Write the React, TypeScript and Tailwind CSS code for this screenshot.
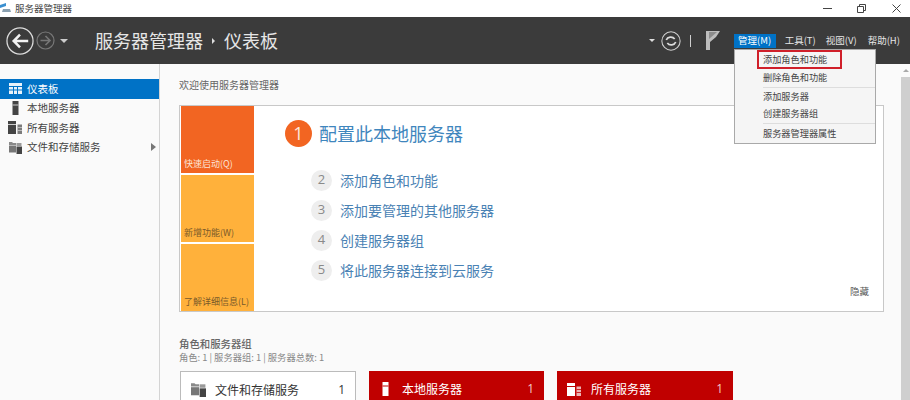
import type { ReactNode } from 'react';

const FONT = "font-['Noto_Sans_CJK_SC','Liberation_Sans',sans-serif]";

function DashIcon({ color }: { color: string }) {
  return (
    <svg width="13" height="11" viewBox="0 0 13 11" className="shrink-0">
      <rect width="13" height="11" fill={color} />
      <path d="M0 3.5h13M0 7h13M4.5 3v8M8.5 3v8" stroke="#0072c6" strokeWidth="1" fill="none" />
    </svg>
  );
}

function TowerIcon({ color, slot }: { color: string; slot: string }) {
  return (
    <svg width="7" height="14" viewBox="0 0 7 14" className="shrink-0">
      <rect x="0.5" width="6" height="14" fill={color} />
      <path d="M0.5 4h6" stroke={slot} strokeWidth="1" />
    </svg>
  );
}

function AllServersIcon({ color, slot }: { color: string; slot: string }) {
  return (
    <svg width="14" height="13" viewBox="0 0 14 13" className="shrink-0">
      <rect width="8" height="13" fill={color} />
      <path d="M0 3.5h8" stroke={slot} strokeWidth="1" />
      <rect x="9.5" y="3.5" width="4.5" height="9.5" fill={color} opacity="0.7" />
      <path d="M9.5 6.5h4.5M9.5 9.5h4.5" stroke={slot} strokeWidth="0.8" />
    </svg>
  );
}

function FilesIcon({ size = 13 }: { size?: number }) {
  return (
    <svg width={size} height={size} viewBox="0 0 13 13" className="shrink-0">
      <path d="M0 1h3l1 1h3v2H0z" fill="#8a8a8a" />
      <rect y="4.5" width="7" height="7" fill="#777" />
      <rect x="7.5" y="2" width="5" height="3" fill="#9a9a9a" />
      <rect x="7.5" y="5.5" width="5.5" height="7.5" fill="#444" />
    </svg>
  );
}

function SideRow({ icon, label, active, arrow }: { icon: ReactNode; label: string; active?: boolean; arrow?: boolean }) {
  return (
    <div className={`flex h-[19.5px] items-center text-[10.5px] ${active ? 'bg-[#0072c6] text-white' : 'text-[#444]'}`}>
      <span className="flex w-[27px] shrink-0 justify-center pl-[3px]">{icon}</span>
      <span className="flex-1">{label}</span>
      {arrow && <span className="mr-[3px] h-0 w-0 border-y-[4px] border-l-[5px] border-y-transparent border-l-[#777]" />}
    </div>
  );
}

function Tile({ label, bg, text, first }: { label: string; bg: string; text: string; first?: boolean }) {
  return (
    <div className={`ml-px flex h-[67px] items-end px-[3px] pb-[2px] text-[9px] leading-[14px] ${bg} ${text} ${first ? '' : 'mt-[2px]'}`}>
      {label}
    </div>
  );
}

function Step({ n, label }: { n: number; label: string }) {
  return (
    <div className="flex h-[30px] items-center">
      <span className="flex h-[21px] w-[21px] items-center justify-center rounded-full bg-[#eeeeee] font-['Open_Sans',sans-serif] text-[13px] text-[#8a8a8a]">
        {n}
      </span>
      <span className="ml-[8px] text-[14px] text-[#4a82b4]">{label}</span>
    </div>
  );
}

function GroupCard({ icon, label, red, width, iconWidth }: { icon: ReactNode; label: string; red?: boolean; width: string; iconWidth: string }) {
  return (
    <div className={`flex h-[38px] items-center pb-[2px] ${width} ${red ? 'bg-[#c00000] text-white' : 'border-x border-t border-[#bbb] bg-white text-[#333]'}`}>
      <span className={`flex shrink-0 justify-center ${iconWidth}`}>{icon}</span>
      <span className="flex-1 text-[12px]">{label}</span>
      <span className={`mr-[10px] font-['Open_Sans',sans-serif] text-[12px] ${red ? 'text-[#f3c9c9]' : ''}`}>1</span>
    </div>
  );
}

export default function App() {
  return (
    <div className={`relative flex h-[400px] w-[910px] flex-col overflow-hidden bg-white ${FONT}`}>
      {/* title bar */}
      <div className="flex h-[17px] shrink-0 items-center bg-white">
        <svg width="11" height="11" viewBox="0 0 11 11" className="shrink-0">
          <path d="M0 2 6 0v3L0 5z" fill="#3a8fd0" />
          <path d="M3 6h7l1 3H2z" fill="#8aa0b0" />
        </svg>
        <span className="ml-[4px] text-[9.5px] text-[#444]">服务器管理器</span>
        <div className="ml-auto flex items-center">
          <span className="h-px w-[9px] bg-[#444]" />
          <svg width="9" height="9" viewBox="0 0 9 9" className="ml-[25px]">
            <path d="M0.5 2.5h6v6h-6zM2.5 2.5v-2h6v6h-2" fill="none" stroke="#444" />
          </svg>
          <svg width="9" height="9" viewBox="0 0 9 9" className="ml-[26px] mr-[9px]">
            <path d="M0.5 0.5l8 8M8.5 0.5l-8 8" stroke="#444" fill="none" />
          </svg>
        </div>
      </div>

      {/* header */}
      <div className="flex h-[47px] shrink-0 items-center bg-[#3b3b3b] text-white">
        <svg width="28" height="28" viewBox="0 0 29 29" className="ml-[6px] shrink-0">
          <circle cx="14.5" cy="14.5" r="13.5" fill="none" stroke="#dcdcdc" strokeWidth="1.3" />
          <path d="M23 14.5H8M14.5 8 8 14.5l6.5 6.5" fill="none" stroke="#f2f2f2" strokeWidth="2.6" />
        </svg>
        <svg width="19" height="19" viewBox="0 0 19 19" className="ml-[2px] shrink-0">
          <circle cx="9.5" cy="9.5" r="8.5" fill="none" stroke="#777" strokeWidth="1.2" />
          <path d="M4.5 9.5h9M9.5 5l4.5 4.5L9.5 14" fill="none" stroke="#777" strokeWidth="1.6" />
        </svg>
        <span className="ml-[5px] h-0 w-0 border-x-[4px] border-t-[4px] border-x-transparent border-t-[#ccc]" />
        <span className="ml-[27px] text-[18px] text-[#e6e6e6]">服务器管理器</span>
        <span className="ml-[9px] h-0 w-0 border-y-[3px] border-l-[3px] border-y-transparent border-l-[#ddd]" />
        <span className="ml-[9px] text-[18px] text-[#e6e6e6]">仪表板</span>

        <div className="ml-auto flex h-full items-center">
          <span className="h-0 w-0 border-x-[3px] border-t-[3px] border-x-transparent border-t-[#ddd]" />
          <svg width="20" height="20" viewBox="0 0 19 19" className="ml-[6px]">
            <circle cx="9.5" cy="9.5" r="8.7" fill="none" stroke="#cfcfcf" strokeWidth="1" />
            <path d="M5 8.5a4.5 4 0 0 1 8-1M14 10.5a4.5 4 0 0 1-8 1" fill="none" stroke="#dcdcdc" strokeWidth="1.6" />
          </svg>
          <span className="ml-[9px] h-[12px] w-px bg-[#cfcfcf]" />
          <svg width="14" height="19" viewBox="0 0 14 19" className="ml-[15px]">
            <path d="M0 0h14l-4 6-6 5v8H0z" fill="#bdbdbd" />
            <path d="M3 1h8L3 8z" fill="#8c8c8c" />
          </svg>
          <div className="ml-[14px] flex h-[14px] w-[42px] items-center justify-center bg-[#0072c6] text-[9.5px] text-white">管理(M)</div>
          <span className="ml-[9px] text-[9.5px] text-[#e6e6e6]">工具(T)</span>
          <span className="ml-[10px] text-[9.5px] text-[#e6e6e6]">视图(V)</span>
          <span className="ml-[11px] mr-[10px] text-[9.5px] text-[#e6e6e6]">帮助(H)</span>
        </div>
      </div>

      <div className="flex min-h-0 flex-1">
        {/* sidebar */}
        <div className="w-[160px] shrink-0 border-r border-[#d4d4d4] bg-[#fafafa] pt-[15px]">
          <SideRow active icon={<DashIcon color="#e8f2fa" />} label="仪表板" />
          <SideRow icon={<TowerIcon color="#444" slot="#ccc" />} label="本地服务器" />
          <SideRow icon={<AllServersIcon color="#444" slot="#ccc" />} label="所有服务器" />
          <SideRow arrow icon={<FilesIcon />} label="文件和存储服务" />
        </div>

        {/* content */}
        <div className="min-w-0 flex-1 bg-[#fafafa] pl-[19px] pt-[14px]">
          <div className="text-[10px] leading-[14px] text-[#666]">欢迎使用服务器管理器</div>

          <div className="mt-[13px] flex h-[207px] w-[705px] border border-[#c8c8c8] bg-white">
            <div className="w-[74px] shrink-0">
              <Tile first label="快速启动(Q)" bg="bg-[#f26522]" text="text-[#fbe3d4]" />
              <Tile label="新增功能(W)" bg="bg-[#ffb13b]" text="text-[#7a5a2a]" />
              <Tile label="了解详细信息(L)" bg="bg-[#ffb13b]" text="text-[#7a5a2a]" />
            </div>
            <div className="relative flex-1 pl-[31px] pt-[14px]">
              <div className="flex h-[27px] items-center">
                <span className="flex h-[27px] w-[27px] items-center justify-center rounded-full bg-[#f26522] font-['Open_Sans',sans-serif] text-[18px] text-[#fde8dc]">
                  1
                </span>
                <span className="ml-[7px] text-[18px] text-[#3f86bd]">配置此本地服务器</span>
              </div>
              <div className="ml-[26px] mt-[18px]">
                <Step n={2} label="添加角色和功能" />
                <Step n={3} label="添加要管理的其他服务器" />
                <Step n={4} label="创建服务器组" />
                <Step n={5} label="将此服务器连接到云服务" />
              </div>
              <span className="absolute bottom-[13px] right-[14px] text-[9.5px] text-[#555]">隐藏</span>
            </div>
          </div>

          <div className="mt-[25px] text-[10.4px] font-medium leading-[13px] text-[#666]">角色和服务器组</div>
          <div className="mt-px text-[9.3px] leading-[12px] text-[#888]">角色: 1 | 服务器组: 1 | 服务器总数: 1</div>
          <div className="ml-px mt-[8px] flex gap-[13px]">
            <GroupCard width="w-[176px]" iconWidth="w-[34px]" icon={<FilesIcon size={15} />} label="文件和存储服务" />
            <GroupCard width="w-[175px]" iconWidth="w-[33px]" red icon={<TowerIcon color="#fff" slot="#c00000" />} label="本地服务器" />
            <GroupCard width="w-[176px]" iconWidth="w-[34px]" red icon={<AllServersIcon color="#fff" slot="#c00000" />} label="所有服务器" />
          </div>
        </div>

        {/* scrollbar */}
        <div className="flex w-[9px] shrink-0 flex-col bg-[#fafafa]">
          <div className="flex h-[13px] items-center justify-center">
            <span className="h-0 w-0 border-x-[3px] border-b-[3px] border-x-transparent border-b-[#aaa]" />
          </div>
          <div className="flex-1 bg-[#cfcfcf]" />
        </div>
      </div>

      {/* manage menu */}
      <div className="absolute left-[734px] top-[49px] h-[95px] w-[142px] border border-[#a9a9a9] bg-[#f5f5f5] pl-[28px] text-[9.2px] text-[#444]">
        <div className="flex h-[19px] w-[85px] -translate-x-[6px] items-center border-2 border-[#d0202a] pl-[4px]">添加角色和功能</div>
        <div className="flex h-[17px] items-center">删除角色和功能</div>
        <div className="mt-px h-px bg-[#ddd]" />
        <div className="flex h-[17px] items-center">添加服务器</div>
        <div className="flex h-[17px] items-center">创建服务器组</div>
        <div className="my-px h-px bg-[#ddd]" />
        <div className="flex h-[17px] items-center">服务器管理器属性</div>
      </div>
    </div>
  );
}
